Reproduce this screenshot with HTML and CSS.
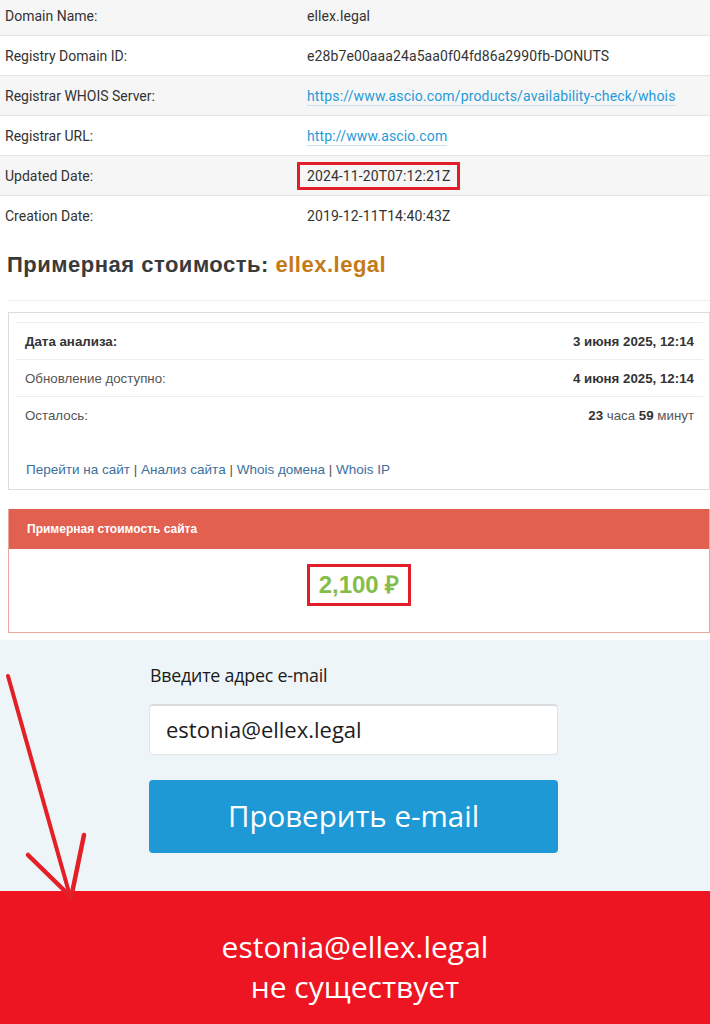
FILE: index.html
```html
<!DOCTYPE html>
<html lang="ru">
<head>
<meta charset="utf-8">
<title>ellex.legal</title>
<link rel="stylesheet" href="styles.css">
</head>
<body>
<div class="page">
  <div class="whois">
    <div class="whois-row first"><div class="wl">Domain Name:</div><div class="wv">ellex.legal</div></div>
    <div class="whois-row"><div class="wl">Registry Domain ID:</div><div class="wv">e28b7e00aaa24a5aa0f04fd86a2990fb-DONUTS</div></div>
    <div class="whois-row"><div class="wl">Registrar WHOIS Server:</div><div class="wv"><a class="wlink" href="#">https://www.ascio.com/products/availability-check/whois</a></div></div>
    <div class="whois-row"><div class="wl">Registrar URL:</div><div class="wv"><a class="wlink" href="#">http://www.ascio.com</a></div></div>
    <div class="whois-row"><div class="wl">Updated Date:</div><div class="wv"><span class="mark mark-date">2024-11-20T07:12:21Z</span></div></div>
    <div class="whois-row last"><div class="wl">Creation Date:</div><div class="wv">2019-12-11T14:40:43Z</div></div>
  </div>

  <h2 class="cost-title">Примерная стоимость: <span class="cost-domain">ellex.legal</span></h2>
  <div class="rule"></div>

  <div class="analysis">
    <div class="an-row"><span class="an-label strong">Дата анализа:</span><span class="an-val strong">3 июня 2025, 12:14</span></div>
    <div class="an-row"><span class="an-label">Обновление доступно:</span><span class="an-val strong">4 июня 2025, 12:14</span></div>
    <div class="an-row"><span class="an-label">Осталось:</span><span class="an-val"><b>23</b> часа <b>59</b> минут</span></div>
    <div class="an-links"><a href="#">Перейти на сайт</a> | <a href="#">Анализ сайта</a> | <a href="#">Whois домена</a> | <a href="#">Whois IP</a></div>
  </div>

  <div class="price-box">
    <div class="price-head">Примерная стоимость сайта</div>
    <div class="price-body"><span class="mark mark-price">2,100 ₽</span></div>
  </div>

  <div class="check">
    <div class="form">
      <div class="form-label">Введите адрес e-mail</div>
      <div class="input">estonia@ellex.legal</div>
      <div class="button">Проверить e-mail</div>
    </div>
    <svg class="arrow" width="100" height="240" viewBox="0 0 100 240">
      <path d="M8 4 L70 224" stroke="#e41f26" stroke-width="4" fill="none" stroke-linecap="round"/>
      <path d="M28 183 L70 224" stroke="#e41f26" stroke-width="4.5" fill="none" stroke-linecap="round"/>
      <path d="M84 163 L71 226" stroke="#e41f26" stroke-width="4.5" fill="none" stroke-linecap="round"/>
    </svg>
  </div>

  <div class="result">
    <div class="result-mail">estonia@ellex.legal</div>
    <div class="result-text">не существует</div>
  </div>
</div>
</body>
</html>
```
FILE: styles.css
```css
* { box-sizing: border-box; }
html, body { margin: 0; padding: 0; background: #fff; }
body { width: 710px; overflow: hidden; }
.page { width: 710px; }

.whois { font-family: Roboto, "Liberation Sans", sans-serif; font-size: 14px; color: #333; }
.whois-row {
  display: grid;
  grid-template-columns: 307px 1fr;
  align-items: center;
  height: 40px;
  border-bottom: 1px solid #e4e4e4;
}
.whois-row:nth-child(odd) { background: #f6f6f6; }
.whois-row.first { height: 36px; padding-bottom: 3px; }
.whois-row.last { border-bottom: none; height: 40px; }
.wl { padding-left: 5px; }
.wv { white-space: nowrap; letter-spacing: 0.1px; }
.wlink { color: #1f9ad8; text-decoration: none; border-bottom: 1px solid #c7e3f2; padding-bottom: 1px; letter-spacing: 0.15px; }

.mark { display: inline-block; border: 3px solid #e31e2a; }
.mark-date { margin-left: -10px; padding: 3px 7px 3px 7px; line-height: 16px; }

.cost-title {
  margin: 15px 0 0 7px;
  font-family: "Liberation Sans", Arial, sans-serif;
  font-weight: bold;
  font-size: 22px;
  letter-spacing: 0.5px;
  line-height: 28px;
  color: #3a3a3a;
}
.cost-domain { color: #c47a17; }
.rule { height: 1px; background: #eeeeee; margin: 21px 0 0 8px; }

.analysis {
  margin: 11px 0 0 8px;
  border: 1px solid #dddddd;
  padding: 9px 6px 0 7px;
  height: 178px;
  font-family: "Liberation Sans", Arial, sans-serif;
  font-size: 13.3px;
  color: #555;
}
.an-row {
  display: flex;
  justify-content: space-between;
  align-items: center;
  height: 37px;
  padding: 0 9px;
  border-top: 1px solid #ececec;
}
.an-row b { color: #333; }
.strong { font-weight: bold; color: #333; }
.an-links { padding: 29px 0 0 10px; color: #555; font-size: 13.5px; }
.an-links a { color: #3d6f9c; text-decoration: none; }

.price-box {
  margin: 19px 0 0 8px;
  border: 1px solid #e9a79f;
  border-top: none;
  height: 124px;
  font-family: "Liberation Sans", Arial, sans-serif;
}
.price-head {
  background: #e2604f;
  color: #fff;
  font-size: 12px;
  font-weight: bold;
  height: 40px;
  line-height: 40px;
  padding-left: 18px;
}
.price-body { display: flex; justify-content: center; padding-top: 15px; }
.mark-price {
  color: #84bd4c;
  font-size: 24px;
  font-weight: bold;
  padding: 6px 9px;
  line-height: 24px;
}

.check {
  position: relative;
  margin-top: 7px;
  background: #eef5f9;
  height: 251px;
  padding: 24px 0 0 149px;
  font-family: "Open Sans", "Noto Sans", sans-serif;
}
.form { width: 409px; }
.form-label { font-size: 17.8px; color: #1a1a1a; padding-left: 1px; height: 40px; line-height: 22px; letter-spacing: -0.2px; }
.input {
  height: 51px;
  background: #fff;
  border: 1px solid #e0e4e7;
  border-top: 2px solid #d8dcdf;
  border-radius: 4px;
  padding-left: 16px;
  font-size: 22px;
  line-height: 47px;
  color: #1d1d1d;
}
.button {
  margin-top: 25px;
  height: 73px;
  background: #1f98d6;
  border-radius: 4px;
  color: #fff;
  text-align: center;
  font-size: 29.5px;
  line-height: 72px;
}
.arrow { position: absolute; left: 0; top: 32px; overflow: visible; }

.result {
  background: #ee1522;
  height: 140px;
  padding-top: 36px;
  text-align: center;
  color: #fff;
  font-family: "Open Sans", "Noto Sans", sans-serif;
  font-size: 30px;
  line-height: 40px;
}
```
